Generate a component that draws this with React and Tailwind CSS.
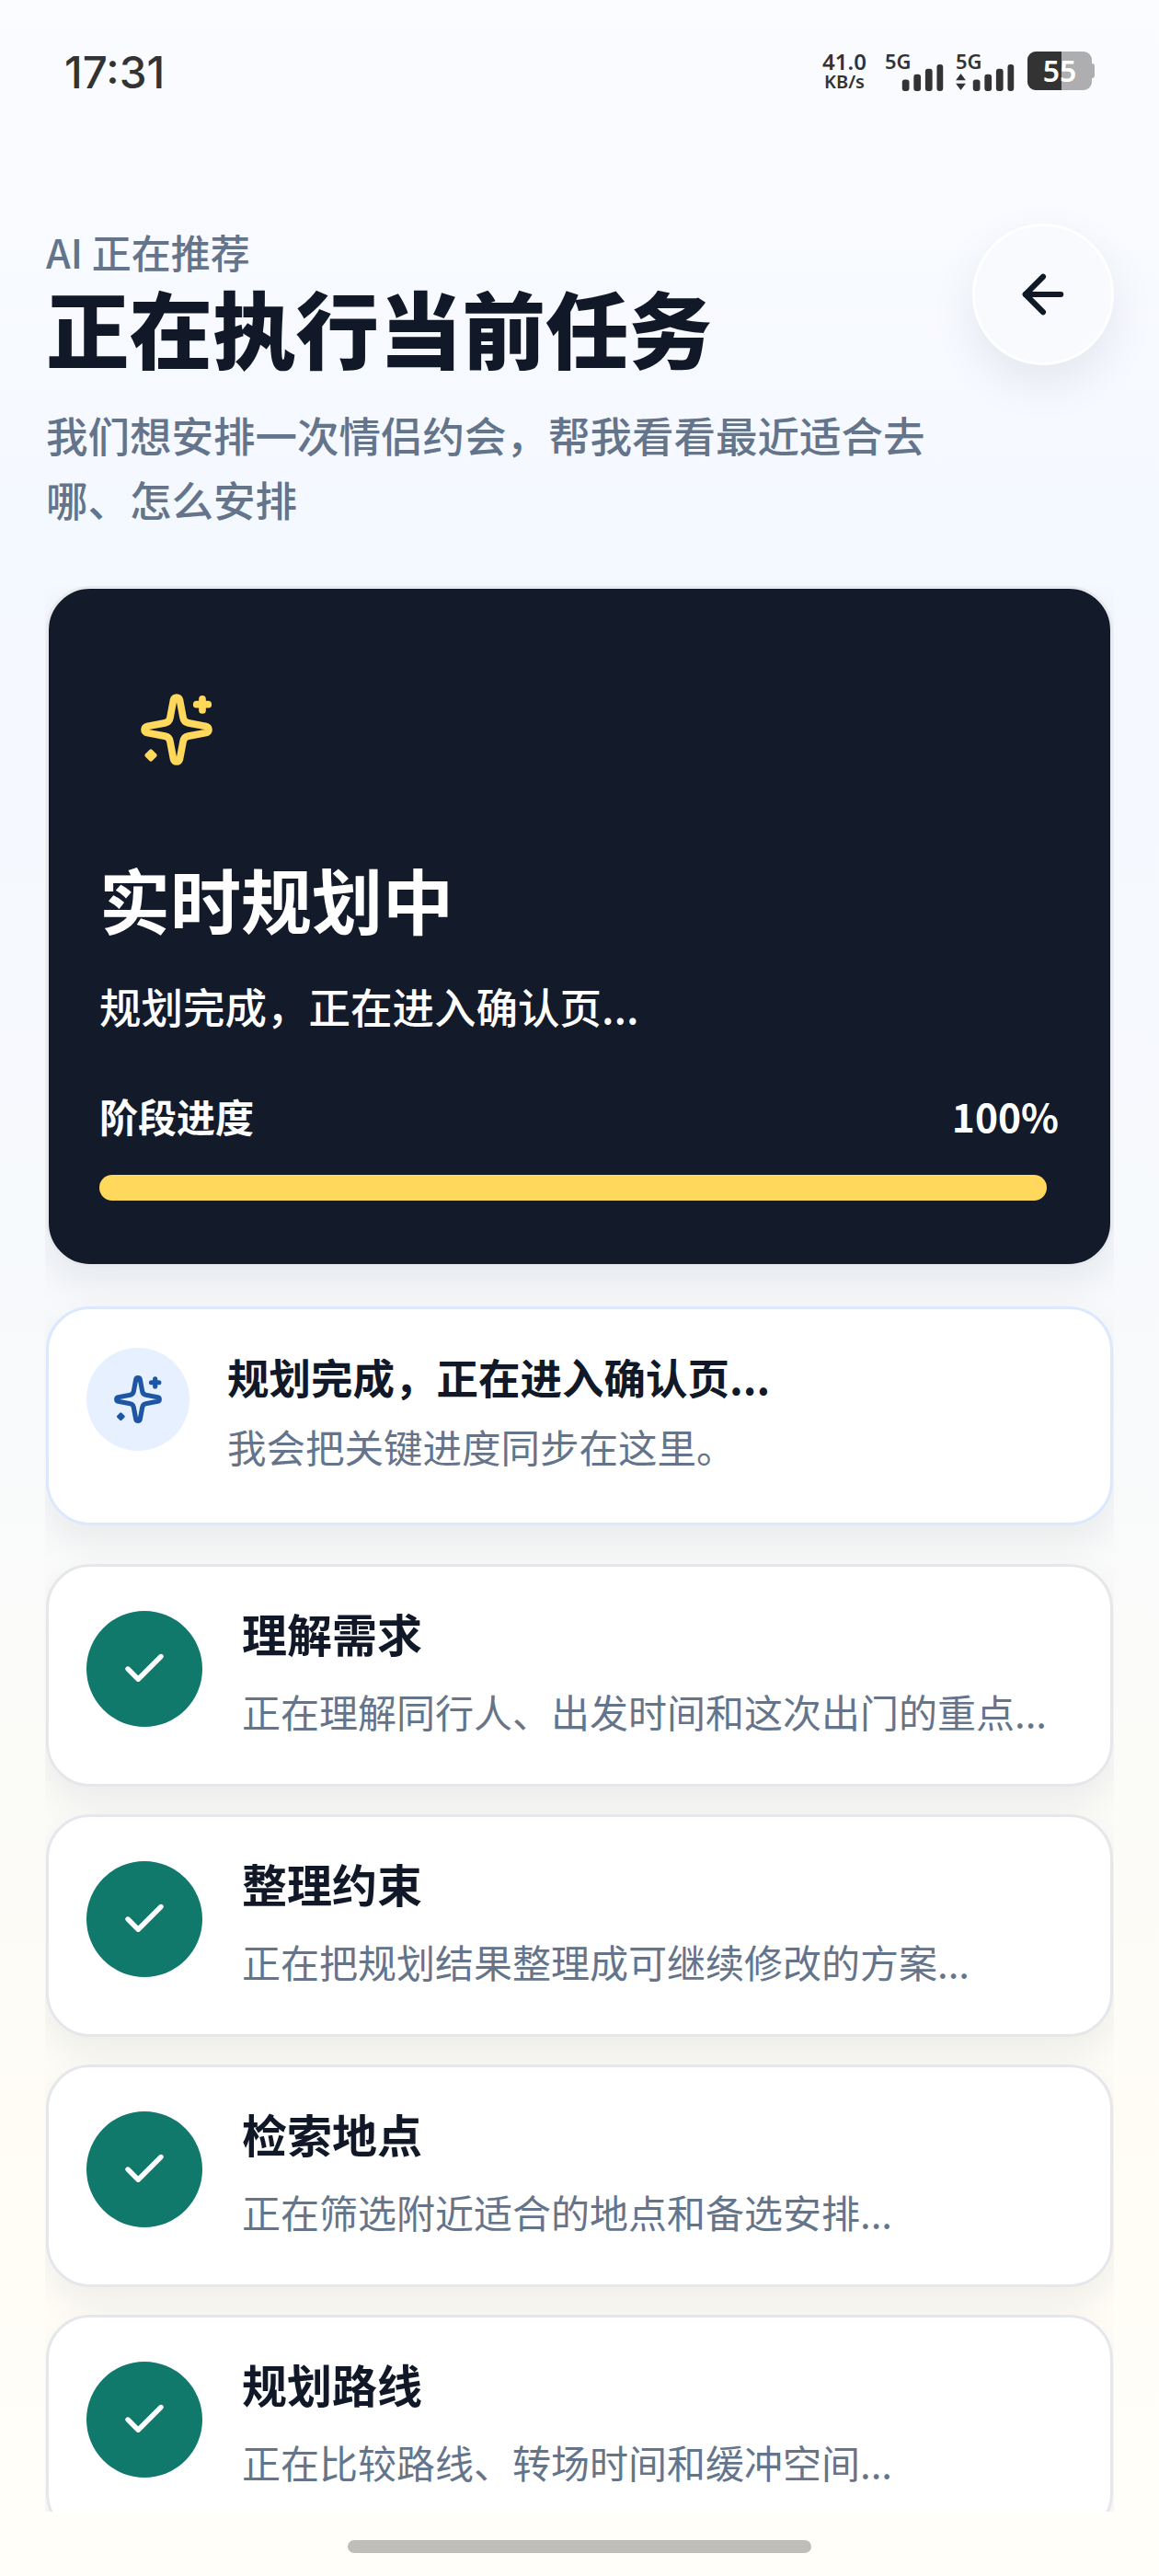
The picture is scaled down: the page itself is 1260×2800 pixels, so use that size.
import React from 'react';
import { ArrowLeft, Check } from 'lucide-react';

const steps = [
    { title: '理解需求', desc: '正在理解同行人、出发时间和这次出门的重点...' },
    { title: '整理约束', desc: '正在把规划结果整理成可继续修改的方案...' },
    { title: '检索地点', desc: '正在筛选附近适合的地点和备选安排...' },
    { title: '规划路线', desc: '正在比较路线、转场时间和缓冲空间...' },
];

const Sparkle = ({ className }) => (
    <svg viewBox="0 0 24 24" fill="none" stroke="currentColor" strokeWidth="2.2" strokeLinecap="round" strokeLinejoin="round" className={className}>
        <path d="M11.017 2.814a1 1 0 0 1 1.966 0l1.051 5.558a2 2 0 0 0 1.594 1.594l5.558 1.051a1 1 0 0 1 0 1.966l-5.558 1.051a2 2 0 0 0-1.594 1.594l-1.051 5.558a1 1 0 0 1-1.966 0l-1.051-5.558a2 2 0 0 0-1.594-1.594l-5.558-1.051a1 1 0 0 1 0-1.966l5.558-1.051a2 2 0 0 0 1.594-1.594z" />
        <path d="M20 2.500v3.500M21.800 4.200h-3.600" />
        <path d="M4 18.700l1.300 1.300-1.300 1.300-1.300-1.300z" fill="currentColor" strokeWidth="1.200" />
    </svg>
);

const Signal = ({ className }) => (
    <svg viewBox="0 0 46 30" className={className} fill="#333333">
        <rect x="0" y="17" width="8" height="13" rx="3" />
        <rect x="13" y="11" width="8" height="19" rx="3" />
        <rect x="26" y="5" width="8" height="25" rx="3" />
        <rect x="39" y="0" width="7" height="30" rx="3" />
    </svg>
);

const StatusBar = () => (
    <div className="flex h-[150px] shrink-0 items-center justify-between pl-[70px] pr-[70px] pt-[4px] text-[#333333]">
        <span className="pt-[3px] text-[47.500px] font-medium leading-none [font-family:Inter,sans-serif]">17:31</span>
        <div className="flex items-center [font-family:'Noto_Sans',sans-serif]">
            <div className="flex w-[52px] flex-col items-center text-[20px] font-semibold">
                <span className="text-[24px] leading-[23px]">41.0</span>
                <span className="leading-[22px]">KB/s</span>
            </div>
            <div className="relative ml-[18px] h-[44px] w-[64px]">
                <span className="absolute left-0 top-[-5px] text-[22px] font-semibold">5G</span>
                <Signal className="absolute bottom-0 right-0 h-[29px] w-[46px]" />
            </div>
            <div className="relative ml-[13px] h-[44px] w-[64px]">
                <span className="absolute left-0 top-[-5px] text-[22px] font-semibold">5G</span>
                <svg viewBox="0 0 12 20" className="absolute bottom-[1px] left-0 h-[18px] w-[11px]" fill="#333333">
                    <path d="M6 0l6 8H0ZM6 20l-6-8h12Z" />
                </svg>
                <Signal className="absolute bottom-0 right-0 h-[29px] w-[46px]" />
            </div>
            <div className="relative ml-[14px] flex h-[42px] w-[70px] overflow-hidden rounded-[9px] bg-[#aeaeb0]">
                <div className="h-full w-[37px] bg-[#333333]" />
                <span className="absolute inset-0 flex items-center justify-center text-[32px] font-semibold leading-none text-white">55</span>
            </div>
            <div className="h-[16px] w-[3px] rounded-r-full bg-[#aeaeb0]" />
        </div>
    </div>
);

const StepCard = ({ title, desc }) => (
    <div className="flex h-[242px] items-start rounded-[48px] border-[3px] border-[#e5e7eb] bg-white pl-[41px] pt-[40px] shadow-[0_18px_44px_rgba(15,23,42,0.07)]">
        <div className="mt-[8px] flex h-[126px] w-[126px] shrink-0 items-center justify-center rounded-full bg-[#11796c]">
            <Check className="h-[54px] w-[54px] text-white" strokeWidth={2.4} />
        </div>
        <div className="ml-[43px] min-w-0">
            <div className="text-[49px] font-bold leading-[64px] text-[#111827]">{title}</div>
            <div className="mt-[23px] text-[42px] leading-[60px] text-[#64748b]">{desc}</div>
        </div>
    </div>
);

const App = () => {
    return (
        <div className="flex h-[2800px] w-[1260px] flex-col overflow-hidden bg-[linear-gradient(180deg,#fbfcff_0%,#f4f8ff_22%,#f7f9fc_50%,#fffdf5_85%,#fffefa_100%)] [font-family:'Noto_Sans_CJK_SC','Noto_Sans',sans-serif]">
            <StatusBar />
            <div className="relative h-[487px] shrink-0 pl-[50px] pr-[50px] pt-[98px]">
                <div className="text-[43px] font-medium leading-[50px] text-[#64748b]">AI 正在推荐</div>
                <h1 className="mt-[7px] text-[90.500px] font-black leading-[100px] text-[#111827]">正在执行当前任务</h1>
                <p className="mt-[32px] w-[970px] text-[45.500px] font-medium leading-[70px] text-[#64748b]">我们想安排一次情侣约会，帮我看看最近适合去哪、怎么安排</p>
                <button className="absolute right-[49px] top-[93px] flex h-[154px] w-[154px] items-center justify-center rounded-full border-[3px] border-white bg-[#f8fafd] text-[#111827] shadow-[0_20px_50px_rgba(15,23,42,0.08)]">
                    <ArrowLeft className="h-[66px] w-[66px]" strokeWidth={2.2} />
                </button>
            </div>
            <div className="mx-[49px] h-[2093px] shrink-0 overflow-hidden">
                <div className="flex flex-col px-[1px]">
                    <div className="h-[740px] rounded-[48px] border-[3px] border-[#e8eaee] bg-[#131b2b] pl-[55px] pr-[56px] pt-[111px] shadow-[0_18px_44px_rgba(15,23,42,0.07)]">
                        <Sparkle className="ml-[42px] h-[84px] w-[84px] text-[#ffd85c]" />
                        <div className="mt-[92px] text-[77px] font-bold leading-[100px] text-white">实时规划中</div>
                        <div className="mt-[36px] text-[45.500px] font-medium leading-[60px] text-white">规划完成，正在进入确认页...</div>
                        <div className="mt-[60px] flex items-center justify-between text-white">
                            <span className="text-[42px] font-bold leading-[60px]">阶段进度</span>
                            <span className="text-[42.500px] font-semibold leading-[60px]">100%</span>
                        </div>
                        <div className="mt-[34px] h-[28px] w-[1030px] rounded-full bg-[#ffd85c]" />
                    </div>
                    <div className="mt-[43px] flex h-[238px] items-start rounded-[48px] border-[3px] border-[#dbe8fd] bg-white pl-[41px] pt-[42px] shadow-[0_18px_44px_rgba(15,23,42,0.07)]">
                        <div className="flex h-[112px] w-[112px] shrink-0 items-center justify-center rounded-full bg-[#e6f0ff]">
                            <Sparkle className="h-[56px] w-[56px] text-[#1f56a4]" />
                        </div>
                        <div className="ml-[41px] mt-[1px]">
                            <div className="text-[45.500px] font-bold leading-[60px] text-[#111827]">规划完成，正在进入确认页...</div>
                            <div className="mt-[16px] text-[42.500px] leading-[60px] text-[#64748b]">我会把关键进度同步在这里。</div>
                        </div>
                    </div>
                    <div className="mt-[42px] flex flex-col gap-[30px]">
                        {steps.map((s) => (
                            <StepCard key={s.title} title={s.title} desc={s.desc} />
                        ))}
                    </div>
                </div>
            </div>
            <div className="flex flex-1 justify-center pt-[31px]">
                <div className="h-[14px] w-[504px] rounded-full bg-[#bfbeb9]" />
            </div>
        </div>
    );
};

export default App;
